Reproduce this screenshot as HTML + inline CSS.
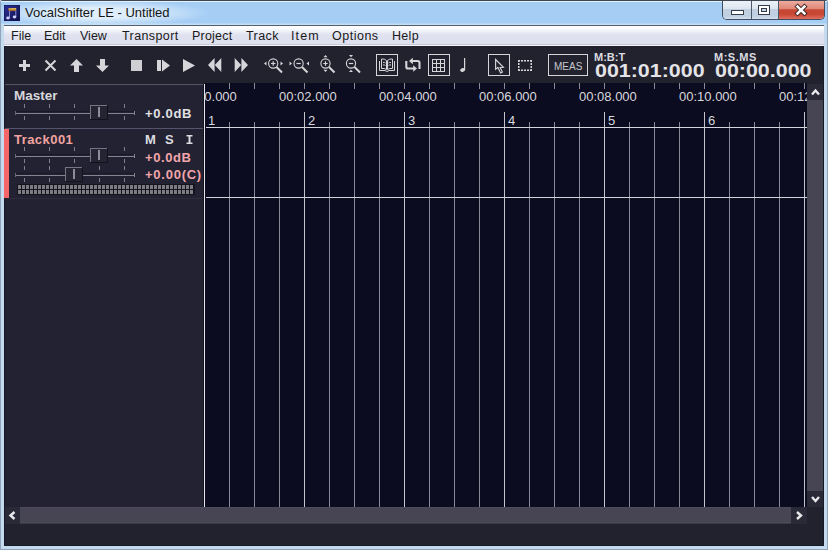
<!DOCTYPE html>
<html><head><meta charset="utf-8">
<style>
html,body{margin:0;padding:0;}
body{width:828px;height:550px;overflow:hidden;position:relative;background:#c6daee;font-family:"Liberation Sans",sans-serif;}
.abs{position:absolute;}
#title{left:1px;top:1px;width:826px;height:24px;background:linear-gradient(#e4f0fa 0,#e4f0fa 1px,#a6cef5 1px,#a6cef5 22px,#c4def4 23px,#c4def4 24px);}
#glow{left:1px;top:2px;width:240px;height:22px;background:radial-gradient(ellipse 112px 13px at 96px 11px,rgba(226,239,251,0.95) 40%,rgba(226,239,251,0) 100%);}
#ttxt{left:25px;top:5px;font-size:13px;color:#141414;white-space:nowrap;}
#menu{left:4px;top:25px;width:820px;height:21px;background:linear-gradient(#fdfdfe 2px,#eceef6 6px,#e0e1ef 9px,#dfe0ef 18px,#c6c8d6 18px,#c6c8d6 19px,#f6f6fa 19px);border-top:1px solid #52606e;box-sizing:border-box;}
.mi{position:absolute;top:3px;font-size:12.5px;color:#1a1a1a;white-space:nowrap;}
#tool{left:4px;top:46px;width:820px;height:38px;background:#22212e;}
#sep{left:4px;top:84px;width:199px;height:1px;background:#55546a;}
#panel{left:4px;top:85px;width:199px;height:422px;background:#232232;}
#gap{left:203px;top:84px;width:1px;height:423px;background:#121120;}
#wline{left:204px;top:84px;width:1px;height:423px;background:#e6e6ea;}
#gridsvg{left:0;top:0;}
.tl{position:absolute;top:89px;font-size:13px;color:#d8d8dc;white-space:nowrap;}
.ml{position:absolute;top:113px;font-size:13px;color:#d8d8dc;}
#clip{left:205px;top:83px;width:602px;height:424px;overflow:hidden;}
#clipin{left:-205px;top:-83px;width:828px;height:550px;}
#vsb{left:807px;top:84px;width:17px;height:423px;background:#474553;}
#hsb{left:4px;top:507px;width:803px;height:17px;background:#474553;}
#bot{left:4px;top:524px;width:820px;height:22px;background:#22212e;}
#corner{left:807px;top:507px;width:17px;height:17px;background:#22212e;}
.sbb{position:absolute;background:#2a2937;}
.bold{font-weight:bold;}
</style></head><body>
<div class="abs" style="left:0;top:0;width:828px;height:550px;box-sizing:border-box;border:1px solid #8ea4ba;border-top-color:#3e4854;border-radius:3px 3px 0 0;"></div>
<div id="title" class="abs"></div>
<div id="glow" class="abs"></div>
<div id="ttxt" class="abs">VocalShifter LE - Untitled</div>
<svg class="abs" style="left:4px;top:5px" width="16" height="16" viewBox="0 0 16 16">
<defs><linearGradient id="ig" x1="0" y1="0" x2="1" y2="1"><stop offset="0" stop-color="#2a309a"/><stop offset="1" stop-color="#101048"/></linearGradient>
<linearGradient id="bg2" x1="0" y1="0" x2="0" y2="1"><stop offset="0" stop-color="#f0d070"/><stop offset="0.5" stop-color="#c89030"/><stop offset="1" stop-color="#804020"/></linearGradient></defs>
<rect x="0" y="0" width="16" height="16" fill="url(#ig)"/>
<rect x="0" y="0" width="16" height="16" fill="none" stroke="#10124a" stroke-width="1"/>
<path d="M4.5 3.2 L12.2 3 L12.2 6 L4.5 6.3 Z" fill="url(#bg2)"/>
<rect x="5" y="6" width="1" height="7" fill="#8a8ad0"/>
<rect x="11.3" y="5.5" width="1" height="6.5" fill="#8a8ad0"/>
<ellipse cx="4" cy="13" rx="1.8" ry="1.4" fill="#d0d0ff"/>
<ellipse cx="10.5" cy="12" rx="1.8" ry="1.4" fill="#d0d0ff"/>
</svg>
<!-- title buttons -->
<div class="abs" style="left:722px;top:0;width:103px;height:20px;border:1px solid #414d5c;border-top:none;border-radius:0 0 5px 5px;box-sizing:border-box;overflow:hidden;">
 <div class="abs" style="left:0;top:0;width:28px;height:19px;background:linear-gradient(#eef3f8,#dde6f0 45%,#c2d1e1 50%,#c0d0e0 85%,#d2e0ee);border-right:1px solid #4d5968;"></div>
 <div class="abs" style="left:29px;top:0;width:26px;height:19px;background:linear-gradient(#eef3f8,#dde6f0 45%,#c2d1e1 50%,#c0d0e0 85%,#d2e0ee);border-right:1px solid #4d5968;"></div>
 <div class="abs" style="left:56px;top:0;width:47px;height:19px;background:linear-gradient(#eeb0a4,#e08878 45%,#c84634 52%,#c84634 75%,#e07060);"></div>
</div>
<div class="abs" style="left:731px;top:10px;width:11px;height:3px;background:#fff;border:1px solid #333c48;"></div>
<div class="abs" style="left:758px;top:5px;width:10px;height:8px;border:1px solid #333c48;background:#fff;"></div>
<div class="abs" style="left:761px;top:8px;width:6px;height:4px;background:#c8d4e0;border:1px solid #333c48;box-sizing:border-box"></div>
<svg class="abs" style="left:794px;top:3px" width="14" height="14" viewBox="0 0 14 14">
<path d="M3.6 3.6 L10.4 10.4 M10.4 3.6 L3.6 10.4" stroke="#3a2424" stroke-width="4.4" stroke-linecap="square"/>
<path d="M3.6 3.6 L10.4 10.4 M10.4 3.6 L3.6 10.4" stroke="#fff" stroke-width="2.6" stroke-linecap="square"/>
</svg>

<div class="abs" style="left:722px;top:0;width:103px;height:1px;background:#3e4854"></div>
<div id="menu" class="abs">
 <div class="mi" style="left:7px">File</div>
 <div class="mi" style="left:40px">Edit</div>
 <div class="mi" style="left:76px">View</div>
 <div class="mi" style="left:118px;letter-spacing:0.4px">Transport</div>
 <div class="mi" style="left:188px;letter-spacing:0.2px">Project</div>
 <div class="mi" style="left:242px;letter-spacing:0.4px">Track</div>
 <div class="mi" style="left:287px;letter-spacing:1.1px">Item</div>
 <div class="mi" style="left:328px;letter-spacing:0.5px">Options</div>
 <div class="mi" style="left:388px;letter-spacing:0.3px">Help</div>
</div>

<div id="tool" class="abs"></div>
<div id="sep" class="abs"></div>

<!-- toolbar icons -->
<svg class="abs" style="left:0;top:0" width="828" height="84" viewBox="0 0 828 84">
<g fill="#d6d6da" stroke="none">
 <rect x="19" y="64" width="11" height="3"/>
 <rect x="23" y="60" width="3" height="11"/>
 <path d="M76.5 59 L83 65.5 L79 65.5 L79 72 L74 72 L74 65.5 L70 65.5 Z"/>
 <path d="M102.5 72 L109 65.5 L105 65.5 L105 59 L100 59 L100 65.5 L96 65.5 Z"/>
 <rect x="131" y="60" width="11" height="11" fill="#cfcfd3"/>
 <rect x="157" y="60" width="4" height="11"/>
 <path d="M162 59.5 L170 65.5 L162 71.5 Z"/>
 <path d="M183 59 L195 65.5 L183 72 Z"/>
 <path d="M208 65 L214.6 58 L214.6 72 Z M214.8 65 L221.3 58 L221.3 72 Z"/>
 <path d="M248 65 L241.4 58 L241.4 72 Z M241.2 65 L234.7 58 L234.7 72 Z"/>
 <path d="M264 63.5 L266.5 61.5 L266.5 65.5 Z M283 63.5 L280.5 61.5 L280.5 65.5 Z"/>
 <path d="M292 63.5 L289.5 61.5 L289.5 65.5 Z M306.5 63.5 L309 61.5 L309 65.5 Z"/>
 <path d="M325.5 55 L327.5 57.3 L323.5 57.3 Z M325.5 72 L327.5 69.7 L323.5 69.7 Z"/>
 <path d="M351 57.3 L353 55 L349 55 Z M351 69.7 L353 72 L349 72 Z"/>
</g>
<g stroke="#d6d6da" fill="none">
 <path d="M45.5 60.5 L55.5 70.5 M55.5 60.5 L45.5 70.5" stroke-width="2"/>
 <circle cx="273.2" cy="63.5" r="4.6" stroke-width="1.1"/>
 <path d="M271 63.5 H275.5 M273.2 61.2 V65.8" stroke-width="1.2"/>
 <path d="M276.5 67 L282 72.5" stroke-width="2"/>
 <circle cx="298.6" cy="63.5" r="4.6" stroke-width="1.1"/>
 <path d="M296.4 63.5 H300.8" stroke-width="1.2"/>
 <path d="M302 67 L307.5 72.5" stroke-width="2"/>
 <circle cx="325.5" cy="63.5" r="4.6" stroke-width="1.1"/>
 <path d="M323.3 63.5 H327.7 M325.5 61.3 V65.7" stroke-width="1.2"/>
 <path d="M329 67 L334.5 72.5" stroke-width="2"/>
 <circle cx="351" cy="63.5" r="4.6" stroke-width="1.1"/>
 <path d="M348.8 63.5 H353.2" stroke-width="1.2"/>
 <path d="M354.5 67 L360 72.5" stroke-width="2"/>
 <rect x="376.5" y="54.5" width="21" height="21" stroke-width="1"/>
 <rect x="428.5" y="54.5" width="21" height="21" stroke-width="1"/>
 <rect x="488.5" y="54.5" width="21" height="21" stroke-width="1"/>
 <rect x="548.5" y="54.5" width="39" height="21" stroke-width="1"/>
 <!-- book -->
 <path d="M379.5 61 V70.5 H385 L387 71.5 L389 70.5 H394.5 V61" stroke-width="1"/>
 <path d="M381.5 59 Q384.5 58.5 386.5 60.5 V69.5 Q384.5 68 381.5 68.5 Z M392.5 59 Q389.5 58.5 387.5 60.5 V69.5 Q389.5 68 392.5 68.5 Z" stroke-width="1"/>
 <path d="M383 62.5 Q384.5 62 385.5 63 M383 65 Q384.5 64.5 385.5 65.5 M391 62.5 Q389.5 62 388.5 63 M391 65 Q389.5 64.5 388.5 65.5" stroke-width="1"/>
 <!-- loop -->
 <path d="M419.5 69 V62.8 Q419.5 61 417.7 61 H412" stroke-width="2.1"/>
 <path d="M406.3 61 V66.7 Q406.3 68.5 408.1 68.5 H414" stroke-width="2.1"/>
 <!-- grid -->
 <rect x="432.5" y="59.5" width="12" height="12" stroke-width="1"/>
 <path d="M436.5 59.5 V71.5 M440.5 59.5 V71.5 M432.5 63.5 H444.5 M432.5 67.5 H444.5" stroke-width="1"/>
 <!-- note -->
 <path d="M464.6 58 V70" stroke-width="1.2"/>
 <!-- cursor -->
 <path d="M495.6 59.5 V69.3 L497.9 67.4 L500.6 73 L502.4 72 L500.1 67.5 L503.4 67.3 Z" stroke-width="1.15" stroke-linejoin="miter"/>
 
</g>
<g fill="#d6d6da">
 <path d="M409 61 L412.8 57.8 L412.8 64.2 Z"/>
 <path d="M417 68.5 L413.2 65.3 L413.2 71.7 Z"/>
 <ellipse cx="462.6" cy="70" rx="2.5" ry="1.8" transform="rotate(-20 462.6 70)"/>
</g>
<g fill="#d6d6da"><rect x="518" y="60" width="2" height="1.5"/><rect x="518" y="69.5" width="2" height="1.5"/><rect x="521" y="60" width="2" height="1.5"/><rect x="521" y="69.5" width="2" height="1.5"/><rect x="524" y="60" width="2" height="1.5"/><rect x="524" y="69.5" width="2" height="1.5"/><rect x="527" y="60" width="2" height="1.5"/><rect x="527" y="69.5" width="2" height="1.5"/><rect x="530" y="60" width="2" height="1.5"/><rect x="530" y="69.5" width="2" height="1.5"/><rect x="518" y="60" width="1.5" height="2"/><rect x="530.5" y="60" width="1.5" height="2"/><rect x="518" y="63" width="1.5" height="2"/><rect x="530.5" y="63" width="1.5" height="2"/><rect x="518" y="66" width="1.5" height="2"/><rect x="530.5" y="66" width="1.5" height="2"/><rect x="518" y="69" width="1.5" height="2"/><rect x="530.5" y="69" width="1.5" height="2"/></g>
</svg>
<div class="abs" style="left:554px;top:61px;font-size:10px;color:#c8c8cc;">MEAS</div>
<div class="abs bold" style="left:594px;top:51px;font-size:11px;color:#dcdce0;">M:B:T</div>
<div class="abs bold" style="left:595px;top:61px;font-size:18px;color:#e4e4e8;transform:scaleX(1.19);transform-origin:0 0;">001:01:000</div>
<div class="abs bold" style="left:714px;top:51px;font-size:11px;letter-spacing:0.5px;color:#dcdce0;">M:S.MS</div>
<div class="abs bold" style="left:715px;top:61px;font-size:18px;color:#e4e4e8;transform:scaleX(1.19);transform-origin:0 0;">00:00.000</div>

<div id="panel" class="abs"></div>
<div id="gap" class="abs"></div>
<div id="wline" class="abs"></div>

<!-- left panel content -->
<div class="abs bold" style="left:14px;top:88px;font-size:13.5px;color:#d8d8dc">Master</div>
<svg class="abs" style="left:0;top:0" width="204" height="210" viewBox="0 0 204 210">
<rect x="15" y="111" width="120" height="1" fill="#1a1926"/>
<rect x="15" y="113" width="120" height="1" fill="#84838f"/>
<rect x="15" y="111" width="1" height="4" fill="#6a6976"/>
<rect x="134" y="111" width="1" height="4" fill="#84838f"/>
<rect x="24" y="104" width="1" height="4" fill="#80808c"/>
<rect x="24" y="116" width="1" height="4" fill="#80808c"/>
<rect x="49" y="104" width="1" height="4" fill="#80808c"/>
<rect x="49" y="116" width="1" height="4" fill="#80808c"/>
<rect x="74" y="104" width="1" height="4" fill="#80808c"/>
<rect x="74" y="116" width="1" height="4" fill="#80808c"/>
<rect x="124" y="104" width="1" height="4" fill="#80808c"/>
<rect x="124" y="116" width="1" height="4" fill="#80808c"/>
<rect x="90" y="105" width="18" height="15" fill="#13121c"/>
<rect x="90" y="105" width="17" height="14" fill="#767584"/>
<rect x="91" y="106" width="16" height="13" fill="#252432"/>
<rect x="98" y="107" width="2" height="10" fill="#8e8d9a"/>
<rect x="15" y="154" width="120" height="1" fill="#1a1926"/>
<rect x="15" y="156" width="120" height="1" fill="#84838f"/>
<rect x="15" y="154" width="1" height="4" fill="#6a6976"/>
<rect x="134" y="154" width="1" height="4" fill="#84838f"/>
<rect x="24" y="147" width="1" height="4" fill="#80808c"/>
<rect x="24" y="159" width="1" height="4" fill="#80808c"/>
<rect x="49" y="147" width="1" height="4" fill="#80808c"/>
<rect x="49" y="159" width="1" height="4" fill="#80808c"/>
<rect x="74" y="147" width="1" height="4" fill="#80808c"/>
<rect x="74" y="159" width="1" height="4" fill="#80808c"/>
<rect x="124" y="147" width="1" height="4" fill="#80808c"/>
<rect x="124" y="159" width="1" height="4" fill="#80808c"/>
<rect x="90" y="148" width="18" height="15" fill="#13121c"/>
<rect x="90" y="148" width="17" height="14" fill="#767584"/>
<rect x="91" y="149" width="16" height="13" fill="#252432"/>
<rect x="98" y="150" width="2" height="10" fill="#8e8d9a"/>
<rect x="15" y="173" width="120" height="1" fill="#1a1926"/>
<rect x="15" y="175" width="120" height="1" fill="#84838f"/>
<rect x="15" y="173" width="1" height="4" fill="#6a6976"/>
<rect x="134" y="173" width="1" height="4" fill="#84838f"/>
<rect x="24" y="166" width="1" height="4" fill="#80808c"/>
<rect x="24" y="178" width="1" height="4" fill="#80808c"/>
<rect x="49" y="166" width="1" height="4" fill="#80808c"/>
<rect x="49" y="178" width="1" height="4" fill="#80808c"/>
<rect x="99" y="166" width="1" height="4" fill="#80808c"/>
<rect x="99" y="178" width="1" height="4" fill="#80808c"/>
<rect x="124" y="166" width="1" height="4" fill="#80808c"/>
<rect x="124" y="178" width="1" height="4" fill="#80808c"/>
<rect x="65" y="167" width="18" height="15" fill="#13121c"/>
<rect x="65" y="167" width="17" height="14" fill="#767584"/>
<rect x="66" y="168" width="16" height="13" fill="#252432"/>
<rect x="73" y="169" width="2" height="10" fill="#8e8d9a"/>
 <rect x="4" y="128" width="199" height="1" fill="#55546a"/>
 <rect x="4" y="129" width="5" height="69" fill="#f46668"/>
 <rect x="9" y="198" width="194" height="1" fill="#2e2d3e"/>
 <rect x="17" y="184" width="178" height="11" fill="#14131f"/>
<rect x="18" y="185" width="3" height="4" fill="#7c7c80"/>
<rect x="22" y="185" width="3" height="4" fill="#7c7c80"/>
<rect x="26" y="185" width="3" height="4" fill="#7c7c80"/>
<rect x="30" y="185" width="3" height="4" fill="#7c7c80"/>
<rect x="34" y="185" width="3" height="4" fill="#7c7c80"/>
<rect x="38" y="185" width="3" height="4" fill="#7c7c80"/>
<rect x="42" y="185" width="3" height="4" fill="#7c7c80"/>
<rect x="46" y="185" width="3" height="4" fill="#7c7c80"/>
<rect x="50" y="185" width="3" height="4" fill="#7c7c80"/>
<rect x="54" y="185" width="3" height="4" fill="#7c7c80"/>
<rect x="58" y="185" width="3" height="4" fill="#7c7c80"/>
<rect x="62" y="185" width="3" height="4" fill="#7c7c80"/>
<rect x="66" y="185" width="3" height="4" fill="#7c7c80"/>
<rect x="70" y="185" width="3" height="4" fill="#7c7c80"/>
<rect x="74" y="185" width="3" height="4" fill="#7c7c80"/>
<rect x="78" y="185" width="3" height="4" fill="#7c7c80"/>
<rect x="82" y="185" width="3" height="4" fill="#7c7c80"/>
<rect x="86" y="185" width="3" height="4" fill="#7c7c80"/>
<rect x="90" y="185" width="3" height="4" fill="#7c7c80"/>
<rect x="94" y="185" width="3" height="4" fill="#7c7c80"/>
<rect x="98" y="185" width="3" height="4" fill="#7c7c80"/>
<rect x="102" y="185" width="3" height="4" fill="#7c7c80"/>
<rect x="106" y="185" width="3" height="4" fill="#7c7c80"/>
<rect x="110" y="185" width="3" height="4" fill="#7c7c80"/>
<rect x="114" y="185" width="3" height="4" fill="#7c7c80"/>
<rect x="118" y="185" width="3" height="4" fill="#7c7c80"/>
<rect x="122" y="185" width="3" height="4" fill="#7c7c80"/>
<rect x="126" y="185" width="3" height="4" fill="#7c7c80"/>
<rect x="130" y="185" width="3" height="4" fill="#7c7c80"/>
<rect x="134" y="185" width="3" height="4" fill="#7c7c80"/>
<rect x="138" y="185" width="3" height="4" fill="#7c7c80"/>
<rect x="142" y="185" width="3" height="4" fill="#7c7c80"/>
<rect x="146" y="185" width="3" height="4" fill="#7c7c80"/>
<rect x="150" y="185" width="3" height="4" fill="#7c7c80"/>
<rect x="154" y="185" width="3" height="4" fill="#7c7c80"/>
<rect x="158" y="185" width="3" height="4" fill="#7c7c80"/>
<rect x="162" y="185" width="3" height="4" fill="#7c7c80"/>
<rect x="166" y="185" width="3" height="4" fill="#7c7c80"/>
<rect x="170" y="185" width="3" height="4" fill="#7c7c80"/>
<rect x="174" y="185" width="3" height="4" fill="#7c7c80"/>
<rect x="178" y="185" width="3" height="4" fill="#7c7c80"/>
<rect x="182" y="185" width="3" height="4" fill="#7c7c80"/>
<rect x="186" y="185" width="3" height="4" fill="#7c7c80"/>
<rect x="190" y="185" width="3" height="4" fill="#7c7c80"/>
<rect x="18" y="190" width="3" height="4" fill="#7c7c80"/>
<rect x="22" y="190" width="3" height="4" fill="#7c7c80"/>
<rect x="26" y="190" width="3" height="4" fill="#7c7c80"/>
<rect x="30" y="190" width="3" height="4" fill="#7c7c80"/>
<rect x="34" y="190" width="3" height="4" fill="#7c7c80"/>
<rect x="38" y="190" width="3" height="4" fill="#7c7c80"/>
<rect x="42" y="190" width="3" height="4" fill="#7c7c80"/>
<rect x="46" y="190" width="3" height="4" fill="#7c7c80"/>
<rect x="50" y="190" width="3" height="4" fill="#7c7c80"/>
<rect x="54" y="190" width="3" height="4" fill="#7c7c80"/>
<rect x="58" y="190" width="3" height="4" fill="#7c7c80"/>
<rect x="62" y="190" width="3" height="4" fill="#7c7c80"/>
<rect x="66" y="190" width="3" height="4" fill="#7c7c80"/>
<rect x="70" y="190" width="3" height="4" fill="#7c7c80"/>
<rect x="74" y="190" width="3" height="4" fill="#7c7c80"/>
<rect x="78" y="190" width="3" height="4" fill="#7c7c80"/>
<rect x="82" y="190" width="3" height="4" fill="#7c7c80"/>
<rect x="86" y="190" width="3" height="4" fill="#7c7c80"/>
<rect x="90" y="190" width="3" height="4" fill="#7c7c80"/>
<rect x="94" y="190" width="3" height="4" fill="#7c7c80"/>
<rect x="98" y="190" width="3" height="4" fill="#7c7c80"/>
<rect x="102" y="190" width="3" height="4" fill="#7c7c80"/>
<rect x="106" y="190" width="3" height="4" fill="#7c7c80"/>
<rect x="110" y="190" width="3" height="4" fill="#7c7c80"/>
<rect x="114" y="190" width="3" height="4" fill="#7c7c80"/>
<rect x="118" y="190" width="3" height="4" fill="#7c7c80"/>
<rect x="122" y="190" width="3" height="4" fill="#7c7c80"/>
<rect x="126" y="190" width="3" height="4" fill="#7c7c80"/>
<rect x="130" y="190" width="3" height="4" fill="#7c7c80"/>
<rect x="134" y="190" width="3" height="4" fill="#7c7c80"/>
<rect x="138" y="190" width="3" height="4" fill="#7c7c80"/>
<rect x="142" y="190" width="3" height="4" fill="#7c7c80"/>
<rect x="146" y="190" width="3" height="4" fill="#7c7c80"/>
<rect x="150" y="190" width="3" height="4" fill="#7c7c80"/>
<rect x="154" y="190" width="3" height="4" fill="#7c7c80"/>
<rect x="158" y="190" width="3" height="4" fill="#7c7c80"/>
<rect x="162" y="190" width="3" height="4" fill="#7c7c80"/>
<rect x="166" y="190" width="3" height="4" fill="#7c7c80"/>
<rect x="170" y="190" width="3" height="4" fill="#7c7c80"/>
<rect x="174" y="190" width="3" height="4" fill="#7c7c80"/>
<rect x="178" y="190" width="3" height="4" fill="#7c7c80"/>
<rect x="182" y="190" width="3" height="4" fill="#7c7c80"/>
<rect x="186" y="190" width="3" height="4" fill="#7c7c80"/>
<rect x="190" y="190" width="3" height="4" fill="#7c7c80"/>
</svg>
<div class="abs bold" style="left:145px;top:106px;font-size:13px;letter-spacing:0.7px;color:#e0e0e4">+0.0dB</div>
<div class="abs bold" style="left:14px;top:132px;font-size:13px;letter-spacing:0.45px;color:#f2a4a0">Track001</div>
<div class="abs bold" style="left:145px;top:132px;font-size:13px;color:#dcdce0">M</div>
<div class="abs bold" style="left:165px;top:132px;font-size:13px;color:#dcdce0">S</div>
<svg class="abs" style="left:186px;top:135px" width="7" height="9" viewBox="0 0 7 9"><path d="M0.5 0h6v1.6h-2v5.8h2V9h-6V7.4h2V1.6h-2z" fill="#dcdce0"/></svg>
<div class="abs bold" style="left:145px;top:150px;font-size:13px;letter-spacing:0.6px;color:#f2a6ac">+0.0dB</div>
<div class="abs bold" style="left:145px;top:167px;font-size:13px;letter-spacing:0.75px;color:#f2a6ac">+0.00(C)</div>

<!-- grid -->
<div id="clip" class="abs"><div id="clipin" class="abs">
<svg class="abs" style="left:0;top:0" width="828" height="550" viewBox="0 0 828 550">
<rect x="205" y="83" width="602" height="424" fill="#0c0c20"/>
<rect x="229" y="83" width="1" height="6" fill="#8a8a98"/>
<rect x="229" y="122" width="1" height="385" fill="#888896"/>
<rect x="254" y="83" width="1" height="6" fill="#8a8a98"/>
<rect x="254" y="122" width="1" height="385" fill="#888896"/>
<rect x="279" y="83" width="1" height="6" fill="#8a8a98"/>
<rect x="279" y="122" width="1" height="385" fill="#888896"/>
<rect x="304" y="83" width="1" height="6" fill="#8a8a98"/>
<rect x="304" y="112" width="1" height="395" fill="#c4c4cc"/>
<rect x="329" y="83" width="1" height="6" fill="#8a8a98"/>
<rect x="329" y="122" width="1" height="385" fill="#888896"/>
<rect x="354" y="83" width="1" height="6" fill="#8a8a98"/>
<rect x="354" y="122" width="1" height="385" fill="#888896"/>
<rect x="379" y="83" width="1" height="6" fill="#8a8a98"/>
<rect x="379" y="122" width="1" height="385" fill="#888896"/>
<rect x="404" y="83" width="1" height="6" fill="#8a8a98"/>
<rect x="404" y="112" width="1" height="395" fill="#c4c4cc"/>
<rect x="429" y="83" width="1" height="6" fill="#8a8a98"/>
<rect x="429" y="122" width="1" height="385" fill="#888896"/>
<rect x="454" y="83" width="1" height="6" fill="#8a8a98"/>
<rect x="454" y="122" width="1" height="385" fill="#888896"/>
<rect x="479" y="83" width="1" height="6" fill="#8a8a98"/>
<rect x="479" y="122" width="1" height="385" fill="#888896"/>
<rect x="504" y="83" width="1" height="6" fill="#8a8a98"/>
<rect x="504" y="112" width="1" height="395" fill="#c4c4cc"/>
<rect x="529" y="83" width="1" height="6" fill="#8a8a98"/>
<rect x="529" y="122" width="1" height="385" fill="#888896"/>
<rect x="554" y="83" width="1" height="6" fill="#8a8a98"/>
<rect x="554" y="122" width="1" height="385" fill="#888896"/>
<rect x="579" y="83" width="1" height="6" fill="#8a8a98"/>
<rect x="579" y="122" width="1" height="385" fill="#888896"/>
<rect x="604" y="83" width="1" height="6" fill="#8a8a98"/>
<rect x="604" y="112" width="1" height="395" fill="#c4c4cc"/>
<rect x="629" y="83" width="1" height="6" fill="#8a8a98"/>
<rect x="629" y="122" width="1" height="385" fill="#888896"/>
<rect x="654" y="83" width="1" height="6" fill="#8a8a98"/>
<rect x="654" y="122" width="1" height="385" fill="#888896"/>
<rect x="679" y="83" width="1" height="6" fill="#8a8a98"/>
<rect x="679" y="122" width="1" height="385" fill="#888896"/>
<rect x="704" y="83" width="1" height="6" fill="#8a8a98"/>
<rect x="704" y="112" width="1" height="395" fill="#c4c4cc"/>
<rect x="729" y="83" width="1" height="6" fill="#8a8a98"/>
<rect x="729" y="122" width="1" height="385" fill="#888896"/>
<rect x="754" y="83" width="1" height="6" fill="#8a8a98"/>
<rect x="754" y="122" width="1" height="385" fill="#888896"/>
<rect x="779" y="83" width="1" height="6" fill="#8a8a98"/>
<rect x="779" y="122" width="1" height="385" fill="#888896"/>
<rect x="804" y="83" width="1" height="6" fill="#8a8a98"/>
<rect x="804" y="112" width="1" height="395" fill="#c4c4cc"/>
<rect x="206" y="127" width="601" height="1" fill="#d4d4dc"/>
<rect x="206" y="197" width="601" height="1" fill="#d4d4dc"/>
</svg>
<div class="tl" style="left:179px">00:00.000</div>
<div class="tl" style="left:279px">00:02.000</div>
<div class="tl" style="left:379px">00:04.000</div>
<div class="tl" style="left:479px">00:06.000</div>
<div class="tl" style="left:579px">00:08.000</div>
<div class="tl" style="left:679px">00:10.000</div>
<div class="tl" style="left:779px">00:12.000</div>
<div class="ml" style="left:208px">1</div>
<div class="ml" style="left:308px">2</div>
<div class="ml" style="left:408px">3</div>
<div class="ml" style="left:508px">4</div>
<div class="ml" style="left:608px">5</div>
<div class="ml" style="left:708px">6</div>
</div></div>

<div id="vsb" class="abs"></div>
<div class="sbb" style="left:807px;top:84px;width:17px;height:16px;"></div>
<div class="sbb" style="left:807px;top:491px;width:17px;height:16px;"></div>
<div id="hsb" class="abs"></div>
<div class="abs" style="left:20px;top:507px;width:771px;height:1px;background:#4d4b5b"></div>
<div class="abs" style="left:20px;top:522px;width:771px;height:1px;background:#4c4a58"></div>
<div class="abs" style="left:4px;top:523px;width:803px;height:1px;background:#3a3946"></div>
<div class="sbb" style="left:4px;top:507px;width:16px;height:17px;"></div>
<div class="sbb" style="left:791px;top:507px;width:16px;height:17px;"></div>
<div id="corner" class="abs"></div>
<div id="bot" class="abs"></div>
<svg class="abs" style="left:0;top:0" width="828" height="550" viewBox="0 0 828 550">
 <g stroke="#e8e8ec" stroke-width="2" fill="none">
  <path d="M812 94.5 L815.5 90.5 L819 94.5" stroke-width="2.4"/>
  <path d="M812 497 L815.5 501 L819 497" stroke-width="2.4"/>
  <path d="M14.5 512 L10.5 515.5 L14.5 519" stroke-width="2.4"/>
  <path d="M797 512 L801 515.5 L797 519" stroke-width="2.4"/>
 </g>
</svg>
<div class="abs" style="left:4px;top:46px;width:1px;height:83px;background:#141a2a"></div>
<div class="abs" style="left:4px;top:198px;width:1px;height:348px;background:#141a2a"></div>
<div class="abs" style="left:4px;top:545px;width:820px;height:1px;background:#141a2a"></div>
<div class="abs" style="left:823px;top:46px;width:1px;height:500px;background:#141a2a"></div>
</body></html>
